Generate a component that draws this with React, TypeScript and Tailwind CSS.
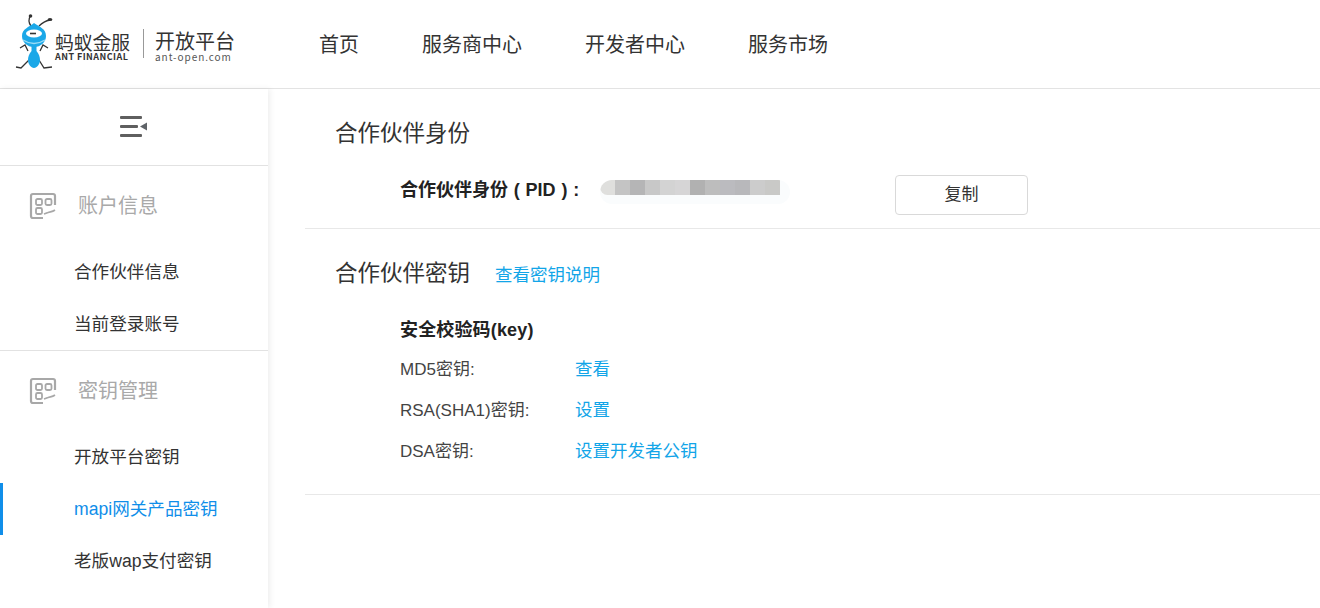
import React from 'react';

const font = { fontFamily: '"Liberation Sans", "Noto Sans CJK SC", sans-serif' };
const cjk = { fontFamily: '"Noto Sans CJK SC", sans-serif' };

function AntLogo() {
  return (
    <svg width="40" height="58" viewBox="0 0 40 58" fill="none" className="block">
      <path d="M16 12 C13 8 14 4 15.5 1.5" stroke="#333" strokeWidth="1.3" />
      <circle cx="15.5" cy="2" r="1.8" fill="#333" />
      <path d="M24 12 C27 9 30 7 35 6" stroke="#333" strokeWidth="1.3" />
      <ellipse cx="35" cy="5.5" rx="2.4" ry="1.6" fill="#333" />
      <path d="M13 37 L10 31 L5 34 M25 37 L28 31 L33 34" stroke="#333" strokeWidth="1.3" />
      <path d="M14 46 L6 54 L1 53 M24 46 L29 54 L37 53" stroke="#333" strokeWidth="1.3" />
      <path d="M19 9 C25 13 31 15 31 22 C31 28 26 33 19 33 C12 33 7 28 7 22 C7 15 14 13 19 9 Z" fill="#1ba8e8" />
      <ellipse cx="19" cy="19.5" rx="8" ry="4" fill="#fff" />
      <path d="M15 19.5 H21" stroke="#333" strokeWidth="1.6" />
      <path d="M8 26 Q19 33 30 26" stroke="#9adcf6" strokeWidth="1.3" />
      <path d="M16.5 32 H21.5 V37 C24 40 25 43 25 46 C25 50 22 54 19 54 C16 54 13 50 13 46 C13 43 14 40 16.5 37 Z" fill="#1ba8e8" />
    </svg>
  );
}

function MenuToggle() {
  return (
    <svg width="28" height="24" viewBox="0 0 28 24" className="block">
      <rect x="0" y="1" width="22" height="3" rx="1" fill="#5f5f5f" />
      <rect x="0" y="10" width="18" height="3" rx="1" fill="#5f5f5f" />
      <rect x="0" y="19" width="22" height="3" rx="1" fill="#5f5f5f" />
      <path d="M20 11.5 L27 7.5 V15.5 Z" fill="#5f6368" />
    </svg>
  );
}

function SectionIcon() {
  return (
    <svg width="28" height="28" viewBox="0 0 28 28" fill="none" stroke="#a8a8a8" strokeWidth="2.2" className="block">
      <path d="M26 13 V4 Q26 2 24 2 H4 Q2 2 2 4 V24 Q2 26 4 26 H14" />
      <rect x="7" y="7" width="6" height="6" rx="1.5" strokeWidth="1.8" />
      <rect x="16.5" y="7" width="6" height="6" rx="1.5" strokeWidth="1.8" />
      <rect x="7" y="16" width="6" height="6" rx="1.5" strokeWidth="1.8" />
      <path d="M15 22 L19 20.5 C21 19.5 23 20 26 18" strokeWidth="1.8" />
    </svg>
  );
}

function SideSection({ title }: { title: string }) {
  return (
    <div className="flex items-center h-[80px] pl-[29px] gap-[21px]">
      <SectionIcon />
      <span className="text-[20px] text-[#a9a9a9]">{title}</span>
    </div>
  );
}

function SideItem({ label, active }: { label: string; active?: boolean }) {
  return (
    <div
      className={
        active
          ? 'h-[52px] flex items-center pl-[71px] border-l-[3px] border-[#108ee9] text-[17.6px] text-[#108ee9]'
          : 'h-[52px] flex items-center pl-[74px] text-[17.6px] text-[#333]'
      }
    >
      {label}
    </div>
  );
}

function KeyRow({ label, action }: { label: string; action: string }) {
  return (
    <div className="flex items-center h-[41px]">
      <span className="w-[175px] text-[17px] text-[#444]">{label}</span>
      <a className="text-[17.5px] text-[#12a5e8]">{action}</a>
    </div>
  );
}

const PID_BLOCKS = ['#c4c4c4', '#b5b5b6', '#c8c8c8', '#d3d3d3', '#d6d5d6', '#b1b1b1', '#bdbdbd', '#bbbbbf', '#b8b8bb', '#cccccc', '#c9c9c7'];

export default function App() {
  return (
    <div className="w-[1320px] h-[608px] bg-white overflow-hidden" style={font}>
      <header className="h-[89px] border-b border-[#e3e3e3] flex items-center">
        <div className="flex items-center w-[319px] pl-[15px] pb-[2px]" style={cjk}>
          <AntLogo />
          <div className="flex flex-col leading-none mt-[6px]">
            <span className="text-[18.75px] text-[#333] leading-[21px]">蚂蚁金服</span>
            <span className="text-[9px] text-[#333] font-semibold leading-[10px] tracking-[0.45px] whitespace-nowrap">ANT FINANCIAL</span>
          </div>
          <div className="w-px h-[29px] bg-[#999] ml-[13px] mr-[11px]" />
          <div className="flex flex-col leading-none mt-[6px]">
            <span className="text-[20px] text-[#333] leading-[22px]">开放平台</span>
            <span className="text-[10px] text-[#555] tracking-[0.95px] leading-[10px]">ant-open.com</span>
          </div>
        </div>
        <nav className="flex gap-[63px] text-[20px] text-[#333] mt-[2px]">
          <span>首页</span>
          <span>服务商中心</span>
          <span>开发者中心</span>
          <span>服务市场</span>
        </nav>
      </header>
      <div className="flex h-[519px]">
        <aside className="w-[268px] shrink-0 shadow-[2px_0_6px_rgba(0,0,0,0.07)]">
          <div className="h-[77px] border-b border-[#e2e2e2] flex items-center justify-center">
            <MenuToggle />
          </div>
          <SideSection title="账户信息" />
          <SideItem label="合作伙伴信息" />
          <SideItem label="当前登录账号" />
          <div className="border-t border-[#e2e2e2]">
            <SideSection title="密钥管理" />
            <SideItem label="开放平台密钥" />
            <SideItem label="mapi网关产品密钥" active />
            <SideItem label="老版wap支付密钥" />
          </div>
        </aside>
        <main className="flex-1 pl-[37px]">
          <section className="h-[140px] border-b border-[#e8e8e8] pl-[30px]">
            <h2 className="text-[22.5px] text-[#333] leading-[32px] pt-[29px] h-[86px]">合作伙伴身份</h2>
            <div className="flex items-start h-[40px] pl-[65px]">
              <span className="w-[200px] text-[18px] font-bold text-[#222] leading-[30px] [word-spacing:0.8px]">合作伙伴身份 ( PID ) :</span>
              <div className="w-[190px] h-[24px] flex rounded-full overflow-hidden bg-[#fafcfd] mt-[5px]">
                <div className="h-[15px] flex">
                  <span className="w-[15px] bg-[#dfdfdd] rounded-l-full" />
                  {PID_BLOCKS.map((c, i) => (
                    <span key={i} className="w-[15px] h-full" style={{ background: c }} />
                  ))}
                </div>
              </div>
              <button className="ml-[105px] w-[133px] h-[40px] border border-[#d9d9d9] rounded-[4px] text-[17px] text-[#333] bg-white">
                复制
              </button>
            </div>
          </section>
          <section className="h-[266px] border-b border-[#e8e8e8] pl-[30px]">
            <div className="flex items-center pt-[29px] h-[61px]">
              <h2 className="text-[22.5px] text-[#333] leading-[32px]">合作伙伴密钥</h2>
              <a className="ml-[25px] mt-[2px] text-[17.5px] text-[#12a5e8]">查看密钥说明</a>
            </div>
            <div className="pl-[65px] pt-[27px]">
              <div className="text-[18px] font-bold text-[#222] h-[26px] leading-[26px] mb-[6px] tracking-[0.15px]">安全校验码(key)</div>
              <KeyRow label="MD5密钥:" action="查看" />
              <KeyRow label="RSA(SHA1)密钥:" action="设置" />
              <KeyRow label="DSA密钥:" action="设置开发者公钥" />
            </div>
          </section>
        </main>
      </div>
    </div>
  );
}
